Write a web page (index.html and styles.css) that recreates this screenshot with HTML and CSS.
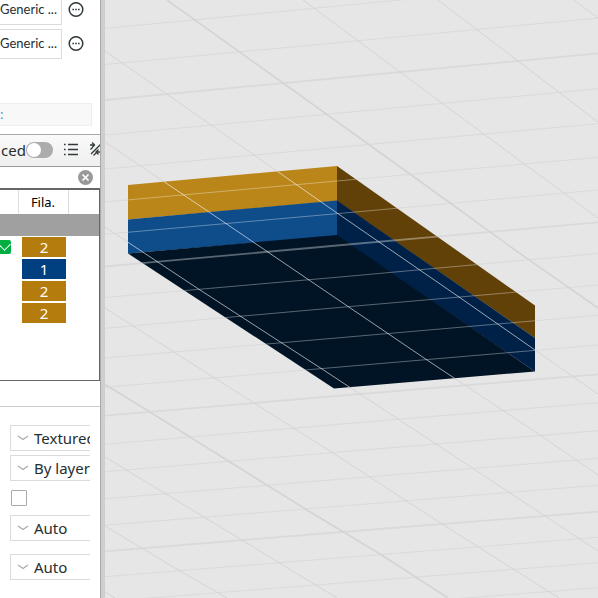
FILE: index.html
```
<!DOCTYPE html>
<html lang="en">
<head>
    <meta charset="UTF-8">
    <meta name="viewport" content="width=device-width, initial-scale=1.0">
    <title>Plate Editor</title>
    <link rel="stylesheet" href="styles.css">
</head>
<body>
    <aside class="sidebar">
        <div class="filaments">
            <div class="filament">
                <select aria-label="Filament 1"><option>Generic ...</option></select>
                <button class="icon" aria-label="Edit filament 1">
                    <svg width="16" height="16" viewBox="0 0 16 16"><circle cx="8" cy="7.500" r="6.800" fill="none" stroke="#323a3d" stroke-width="1.500"/><path d="M4.400 7.500h1.600M7.200 7.500h1.600M10 7.500h1.600" stroke="#323a3d" stroke-width="1.600"/></svg>
                </button>
            </div>
            <div class="filament">
                <select aria-label="Filament 2"><option>Generic ...</option></select>
                <button class="icon" aria-label="Edit filament 2">
                    <svg width="16" height="16" viewBox="0 0 16 16"><circle cx="8" cy="7.500" r="6.800" fill="none" stroke="#323a3d" stroke-width="1.500"/><path d="M4.400 7.500h1.600M7.200 7.500h1.600M10 7.500h1.600" stroke="#323a3d" stroke-width="1.600"/></svg>
                </button>
            </div>
        </div>
        <div class="title-bar">:</div>

        <div class="toolbar">
            <label for="advanced">ced</label>
            <input type="checkbox" id="advanced" class="toggle">
            <button class="icon list" aria-label="List">
                <svg width="14" height="14" viewBox="0 0 14 14"><path d="M4 1.500h10M4 6.500h10M4 11.500h10" stroke="#323a3d" stroke-width="1.300"/><path d="M0 1.500h1.600M0 6.500h1.600M0 11.500h1.600" stroke="#323a3d" stroke-width="1.600"/></svg>
            </button>
            <button class="icon compare" aria-label="Compare">
                <svg width="16" height="16" viewBox="0 0 16 16"><path d="M0 3h4M2.200 0.500L4.500 3 2.200 5.500M1 12L11.500 1.500M0.500 7.500l2-2M3.500 13.500l2.500-2.500M14 10H6.500M8.500 7.500L6 10l2.500 2.500" fill="none" stroke="#323a3d" stroke-width="1.300"/></svg>
            </button>
        </div>

        <div class="search">
            <input type="text" aria-label="Search">
            <button class="icon" aria-label="Clear">
                <svg width="15" height="15" viewBox="0 0 15 15"><circle cx="7.500" cy="7.500" r="7.500" fill="#999"/><path d="M4.500 4.500l6 6M10.500 4.500l-6 6" stroke="#fff" stroke-width="1.700"/></svg>
            </button>
        </div>

        <div class="objects">
            <table>
                <thead>
                    <tr><th class="check"></th><th class="fila">Fila.</th><th></th></tr>
                </thead>
                <tbody>
                    <tr class="plate"><td colspan="3"></td></tr>
                    <tr><td class="check"><input type="checkbox" aria-label="Printable" checked></td><td><span class="swatch gold">2</span></td><td></td></tr>
                    <tr><td></td><td><span class="swatch blue">1</span></td><td></td></tr>
                    <tr><td></td><td><span class="swatch gold">2</span></td><td></td></tr>
                    <tr><td></td><td><span class="swatch gold">2</span></td><td></td></tr>
                </tbody>
            </table>
        </div>

        <div class="options">
            <div class="combo">
                <svg width="12" height="8" viewBox="0 0 12 8"><path d="M1 2l5 3.500L11 2" fill="none" stroke="#aaa" stroke-width="1.200"/></svg>
                <select aria-label="Plate type"><option>Textured</option></select>
            </div>
            <div class="combo">
                <svg width="12" height="8" viewBox="0 0 12 8"><path d="M1 2l5 3.500L11 2" fill="none" stroke="#aaa" stroke-width="1.200"/></svg>
                <select aria-label="Print sequence"><option>By layer</option></select>
            </div>
            <input type="checkbox" class="box" aria-label="Spiral vase">
            <div class="combo">
                <svg width="12" height="8" viewBox="0 0 12 8"><path d="M1 2l5 3.500L11 2" fill="none" stroke="#aaa" stroke-width="1.200"/></svg>
                <select aria-label="First layer sequence"><option>Auto</option></select>
            </div>
            <div class="combo last">
                <svg width="12" height="8" viewBox="0 0 12 8"><path d="M1 2l5 3.500L11 2" fill="none" stroke="#aaa" stroke-width="1.200"/></svg>
                <select aria-label="Other layers sequence"><option>Auto</option></select>
            </div>
        </div>
    </aside>

    <main class="scene">
        <svg viewBox="105 0 493 598" preserveAspectRatio="xMinYMin slice">
            <defs>
                <clipPath id="model"><path d="M128 185L337 166L535 305.500V371.500L334 388.500L128 253.500Z"/></clipPath>
                <g id="rows" fill="none">
                    <path d="M105 28.500L348 5L598-19M105 64.500L348 41.700L598 18M105 135L348 112.300L598 88.700M105 169L348 146.300L598 123.700M105 202L348 180L598 157.300M105 234.300L348 212.700L598 190M105 297.500L348 276.300L598 253.500M105 328.300L348 306.700L598 285M105 358L348 337L598 315.300M105 387.300L348 366.300L598 345M105 444.300L348 423.500L598 402.700M105 471.700L348 451.300L598 430.700M105 498.700L348 478.500L598 458.300M105 525.200L348 505.500L598 485.300M105 576.700L348 557.200L598 537.300M105 601.500L348 582.500L598 562.700M105 626L598 587.700"/>
                    <path stroke-width="1.800" d="M105 100L348 77L598 53.300M105 266.500L348 244.500L598 222.300M105 415.700L348 395L598 374.300M105 551.300L348 531.500L598 511.700"/>
                </g>
                <g id="columns" fill="none">
                    <path d="M574 0L598 18M438 0L518 61L598 122M303 0L400 72L523 163L598 218M105 51L211 125L337 213L459 297L598 394M105 142L209 212L309 280L427 360L540 435L598 475M105 227L200 290L322 369L436 444L545 516L598 551M105 308L213 377L333 453L442 524L559 598M105 457L204 517L337 598M105 526L180 571L227 598M105 592L115 598"/>
                    <path stroke-width="1.600" d="M167 0L350 131L446 200L515 250L598 308M105 384.500L150 412L230 462L307 510L380 554L448 598"/>
                </g>
            </defs>
            <rect x="105" width="493" height="598" fill="#e6e6e6"/>
            <use href="#rows" stroke="#dadada"/>
            <use href="#columns" stroke="#d4d4d4"/>

            <path fill="#ba8519" d="M128 185L337 166V201L128 219.500Z"/>
            <path fill="#0e4c8a" d="M128 219.500L337 200.500V236L128 253.500Z"/>
            <path fill="#614108" d="M337 166L535 305.500V338L337 201Z"/>
            <path fill="#002147" d="M337 200.500L535 338V371.500L337 236Z"/>
            <path fill="#001426" d="M128 253.500L337 235L535 371.500L334 388.500Z"/>
            <g clip-path="url(#model)">
                <use href="#rows" stroke="#fff" stroke-opacity=".35"/>
                <use href="#columns" stroke="#fff" stroke-opacity=".6"/>
            </g>
        </svg>
    </main>
</body>
</html>
```

FILE: styles.css
```
* {
    box-sizing: border-box;
}

body {
    margin: 0;
    display: flex;
    height: 100vh;
    overflow: hidden;
    background-color: #e6e6e6;
    font-family: "Noto Sans", sans-serif;
    font-size: 15px;
    color: #262e30;
}

button {
    display: flex;
    padding: 0;
    border: none;
    background: none;
}

select {
    appearance: none;
    padding: 0;
    border: none;
    border-radius: 0;
    background: white;
    font: inherit;
    color: inherit;
}

.sidebar {
    flex: 0 0 105px;
    overflow: hidden;
    background-color: white;
    border-right: 4px solid #cecece;
    box-shadow: inset -1px 0 #a8a8a8;
    padding-right: 1px;
}

/* filament list, scrolled so the first row is cut at the top */
.filaments {
    display: flex;
    flex-direction: column;
    gap: 4px;
    margin-top: -5px;
}

.filament {
    display: flex;
    align-items: center;
    gap: 6px;
}

.filament select {
    width: 62px;
    height: 30px;
    padding-bottom: 2px;
    border: 1px solid #dbdbdb;
    border-left: none;
    font-family: Lato, sans-serif;
    font-size: 13px;
}

.title-bar {
    height: 23px;
    margin: 44px 8px 8px 0;
    border: 1px solid #eee;
    border-left: none;
    background-color: #f8f8f8;
    font-size: 13px;
    line-height: 20px;
    color: #4a90d0;
}

.toolbar {
    display: flex;
    align-items: center;
    height: 32px;
    padding: 0 0 2px 1px;
    overflow: hidden;
    border-top: 1px solid #a8a8a8;
    background: linear-gradient(#fafafa, #efefef);
}

.toolbar label {
    width: 26px;
}

.toolbar .icon {
    flex: none;
}

.toolbar .list {
    margin: 0 12px 0 11px;
}

.toggle {
    appearance: none;
    flex: none;
    width: 27px;
    height: 16px;
    margin: 0;
    border-radius: 8px;
    background-color: #acacac;
}

.toggle::before {
    content: "";
    display: block;
    width: 14px;
    height: 14px;
    margin: 1px;
    border-radius: 50%;
    background-color: white;
}

.search {
    display: flex;
    align-items: center;
    justify-content: space-between;
    height: 22px;
    padding-right: 7px;
    border-top: 1px solid #999;
}

.search input {
    width: 70px;
    height: 18px;
    padding: 0;
    border: none;
    outline: none;
}

.objects {
    height: 193px;
    border: 1px solid #666;
    border-top-width: 2px;
    border-left: none;
}

table {
    width: 100%;
    table-layout: fixed;
    border-collapse: collapse;
}

th {
    height: 24px;
    padding: 0;
    border-right: 1px solid #ddd;
    font-size: 13px;
    line-height: 18px;
    font-weight: normal;
    color: black;
}

th:last-child {
    border-right: none;
}

th.check {
    width: 18px;
}

th.fila {
    width: 50px;
}

td {
    height: 22px;
    padding: 0;
}

.plate {
    background-color: #a0a0a0;
}

.check input {
    appearance: none;
    display: block;
    width: 11px;
    height: 14px;
    margin: 0;
    overflow: hidden;
    border-radius: 0 2px 2px 0;
    background-color: #00ae42;
}

.check input::before {
    content: "";
    display: block;
    width: 8px;
    height: 8px;
    border: solid white;
    border-width: 0 1px 1px 0;
    transform: rotate(45deg);
}

.swatch {
    display: block;
    width: 44px;
    height: 20px;
    margin: 0 auto 0 4px;
    line-height: 20px;
    text-align: center;
    color: white;
}

.gold {
    background-color: #b47c0c;
}

.blue {
    background-color: #004080;
}

.options {
    display: flex;
    flex-direction: column;
    gap: 4px;
    margin-top: 25px;
    padding: 18px 10px 0 10px;
    border-top: 1px solid #ccc;
}

.combo {
    display: flex;
    align-items: center;
    gap: 5px;
    height: 26px;
    padding-left: 6px;
    overflow: hidden;
    border: 1px solid #dbdbdb;
    border-right: none;
}

.combo svg {
    flex: none;
}

.combo select {
    flex: 1;
    min-width: 0;
}

.box {
    appearance: none;
    width: 16px;
    height: 16px;
    margin: 5px 1px;
    border: 1px solid #aaa;
    border-radius: 1px;
}

.last {
    margin-top: 9px;
}

.scene {
    flex: 1;
    min-width: 0;
}

.scene svg {
    display: block;
    width: 100%;
    height: 100%;
}
```
